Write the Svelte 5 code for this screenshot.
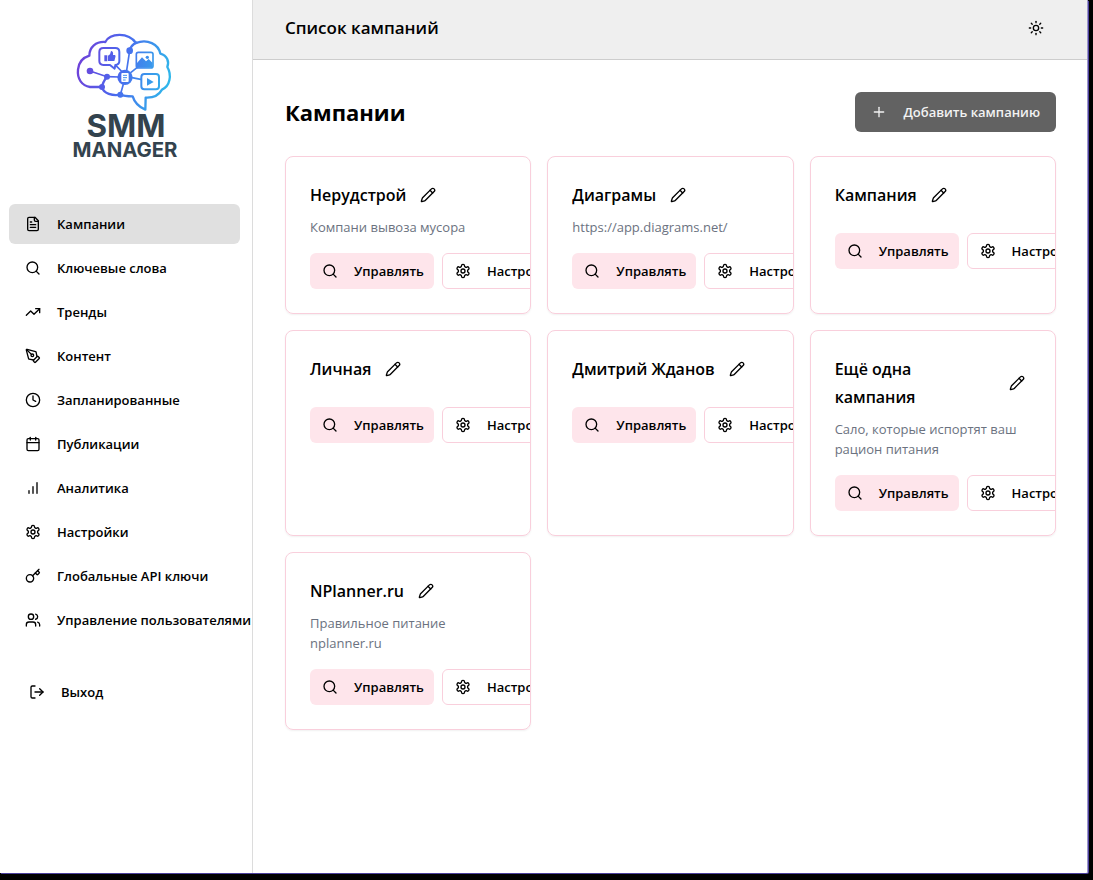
<script>
  const nav = [
    { label: 'Кампании', icon: 'file', active: true },
    { label: 'Ключевые слова', icon: 'search' },
    { label: 'Тренды', icon: 'trend' },
    { label: 'Контент', icon: 'pen' },
    { label: 'Запланированные', icon: 'clock' },
    { label: 'Публикации', icon: 'calendar' },
    { label: 'Аналитика', icon: 'bars' },
    { label: 'Настройки', icon: 'gear' },
    { label: 'Глобальные API ключи', icon: 'key' },
    { label: 'Управление пользователями', icon: 'users' }
  ];

  const campaigns = [
    { name: 'Нерудстрой', text: 'Компани вывоза мусора' },
    { name: 'Диаграмы', text: 'https://app.diagrams.net/' },
    { name: 'Кампания', text: '' },
    { name: 'Личная', text: '' },
    { name: 'Дмитрий Жданов', text: '' },
    { name: 'Ещё одна кампания', text: 'Сало, которые испортят ваш рацион питания' },
    { name: 'NPlanner.ru', text: 'Правильное питание nplanner.ru' }
  ];

  const icons = {
    file: ['M15 2H6a2 2 0 0 0-2 2v16a2 2 0 0 0 2 2h12a2 2 0 0 0 2-2V7Z', 'M14 2v4a2 2 0 0 0 2 2h4', 'M10 9H8', 'M16 13H8', 'M16 17H8'],
    search: ['M19 11a8 8 0 1 1-16 0a8 8 0 0 1 16 0Z', 'm21 21-4.3-4.3'],
    trend: ['M22 7l-8.5 8.5-5-5L2 17', 'M16 7h6v6'],
    pen: ['M15.707 21.293a1 1 0 0 1-1.414 0l-1.586-1.586a1 1 0 0 1 0-1.414l5.586-5.586a1 1 0 0 1 1.414 0l1.586 1.586a1 1 0 0 1 0 1.414z', 'm18 13-1.375-6.874a1 1 0 0 0-.746-.776L3.235 2.028a1 1 0 0 0-1.207 1.207L5.35 15.879a1 1 0 0 0 .776.746L13 18', 'm2.3 2.3 7.286 7.286', 'M13 11a2 2 0 1 1-4 0a2 2 0 0 1 4 0Z'],
    clock: ['M22 12a10 10 0 1 1-20 0a10 10 0 0 1 20 0Z', 'M12 6v6l4 2'],
    calendar: ['M8 2v4', 'M16 2v4', 'M5 4h14a2 2 0 0 1 2 2v14a2 2 0 0 1-2 2H5a2 2 0 0 1-2-2V6a2 2 0 0 1 2-2Z', 'M3 10h18'],
    bars: ['M12 20V10', 'M18 20V4', 'M6 20v-4'],
    gear: ['M12.22 2h-.44a2 2 0 0 0-2 2v.18a2 2 0 0 1-1 1.73l-.43.25a2 2 0 0 1-2 0l-.15-.08a2 2 0 0 0-2.73.73l-.22.38a2 2 0 0 0 .73 2.73l.15.1a2 2 0 0 1 1 1.72v.51a2 2 0 0 1-1 1.74l-.15.09a2 2 0 0 0-.73 2.73l.22.38a2 2 0 0 0 2.73.73l.15-.08a2 2 0 0 1 2 0l.43.25a2 2 0 0 1 1 1.73V20a2 2 0 0 0 2 2h.44a2 2 0 0 0 2-2v-.18a2 2 0 0 1 1-1.73l.43-.25a2 2 0 0 1 2 0l.15.08a2 2 0 0 0 2.73-.73l.22-.39a2 2 0 0 0-.73-2.73l-.15-.08a2 2 0 0 1-1-1.74v-.5a2 2 0 0 1 1-1.74l.15-.09a2 2 0 0 0 .73-2.73l-.22-.38a2 2 0 0 0-2.73-.73l-.15.08a2 2 0 0 1-2 0l-.43-.25a2 2 0 0 1-1-1.73V4a2 2 0 0 0-2-2z', 'M15 12a3 3 0 1 1-6 0a3 3 0 0 1 6 0Z'],
    key: ['m15.5 7.5 2.3 2.3a1 1 0 0 0 1.4 0l2.1-2.1a1 1 0 0 0 0-1.4L19 4', 'm21 2-9.6 9.6', 'M13 15.5a5.5 5.5 0 1 1-11 0a5.5 5.5 0 0 1 11 0Z'],
    users: ['M16 21v-2a4 4 0 0 0-4-4H6a4 4 0 0 0-4 4v2', 'M13 7a4 4 0 1 1-8 0a4 4 0 0 1 8 0Z', 'M22 21v-2a4 4 0 0 0-3-3.87', 'M16 3.13a4 4 0 0 1 0 7.75'],
    exit: ['M9 21H5a2 2 0 0 1-2-2V5a2 2 0 0 1 2-2h4', 'm16 17 5-5-5-5', 'M21 12H9'],
    pencil: ['M21.174 6.812a1 1 0 0 0-3.986-3.987L3.842 16.174a2 2 0 0 0-.5.83l-1.321 4.352a.5.5 0 0 0 .623.622l4.353-1.32a2 2 0 0 0 .83-.497z', 'm15 5 4 4'],
    plus: ['M5 12h14', 'M12 5v14'],
    sun: ['M16 12a4 4 0 1 1-8 0a4 4 0 0 1 8 0Z', 'M12 2v2', 'M12 20v2', 'm4.93 4.93 1.41 1.41', 'm17.66 17.66 1.41 1.41', 'M2 12h2', 'M20 12h2', 'm6.34 17.66-1.41 1.41', 'm19.07 4.93-1.41 1.41']
  };
</script>

{#snippet icon(name)}
  <svg class="icon" viewBox="0 0 24 24" aria-hidden="true">
    {#each icons[name] as d}<path {d} />{/each}
  </svg>
{/snippet}

<div class="app">
  <aside class="sidebar">
    <svg class="logo" viewBox="0 0 390 435" role="img" aria-label="SMM Manager">
      <defs>
        <linearGradient id="brand" gradientUnits="userSpaceOnUse" x1="50" y1="110" x2="330" y2="170">
          <stop offset="0" stop-color="#7040d8" />
          <stop offset="0.45" stop-color="#4a68ee" />
          <stop offset="1" stop-color="#2fb8ea" />
        </linearGradient>
      </defs>
      <g fill="none" stroke="url(#brand)" stroke-width="7" stroke-linecap="round" stroke-linejoin="round">
        <path d="M126 186H90C66 182 51 162 54 134C56 112 68 98 88 92C88 66 108 49 136 51C150 24 204 20 228 54C262 40 296 58 301 86C322 92 328 110 322 126C336 150 330 184 306 194C296 212 276 219 257 218L256 254C240 247 224 234 218 214C205 214 190 213 181 209C158 213 130 206 126 186C128 172 136 162 141 155" />
        <path d="M209 77C211 66 218 58 230 53" />
        <path d="M90 138L141 155L178 156M209 77L200 136M181 209L190 178M213 142L232 127M216 158L242 163M168 122L184 138" stroke-width="5" />
        <path d="M130 69H166Q178 69 178 81V108Q178 119 166 120L164 131L150 120H130Q118 119 118 108V81Q118 69 130 69Z" stroke-width="6" />
        <rect x="229" y="82" width="50" height="47" rx="6" stroke-width="5" />
        <rect x="244" y="147" width="53" height="46" rx="9" stroke-width="6" />
      </g>
      <g fill="url(#brand)">
        <circle cx="90" cy="138" r="10" />
        <circle cx="141" cy="155" r="9" />
        <circle cx="209" cy="77" r="10" />
        <circle cx="126" cy="186" r="9" />
        <circle cx="181" cy="209" r="9" />
        <circle cx="195" cy="157" r="23" />
        <path d="M133 91h9v18h-9zM144 92l6-4l3-10q8 1 6 12h6q3 2 1 7l-3 11h-19z" />
        <path d="M231 114L246 97L258 109L266 102L278 114V128H231Z" />
        <circle cx="262" cy="97" r="5" />
        <path d="M261 159v23l20-11z" />
      </g>
      <rect x="184" y="144" width="22" height="27" rx="3" fill="#fff" />
      <path d="M189 151h12M189 158h12M189 165h8" stroke="#4590ee" stroke-width="3" />
      <text x="198" y="335" class="brand-top">SMM</text>
      <text x="195" y="395" class="brand-bottom">MANAGER</text>
    </svg>
    <nav>
      {#each nav as item}
        <a href="#{item.icon}" class="nav-item" class:active={item.active}>{@render icon(item.icon)}{item.label}</a>
      {/each}
    </nav>
    <button class="exit" type="button">{@render icon('exit')}Выход</button>
  </aside>

  <div class="page">
    <header>
      <div class="bar-title">Список кампаний</div>
      <button class="theme" type="button" aria-label="Тема">{@render icon('sun')}</button>
    </header>
    <main>
      <div class="heading">
        <h1>Кампании</h1>
        <button class="add" type="button">{@render icon('plus')}Добавить кампанию</button>
      </div>
      <div class="grid">
        {#each campaigns as c}
          <article class="card">
            <div class="title">
              <h2>{c.name}</h2>
              <button class="edit" type="button" aria-label="Переименовать">{@render icon('pencil')}</button>
            </div>
            <p>{c.text}</p>
            <div class="actions">
              <button class="btn manage" type="button">{@render icon('search')}Управлять</button>
              <button class="btn settings" type="button">{@render icon('gear')}Настройки</button>
            </div>
          </article>
        {/each}
      </div>
    </main>
  </div>
</div>

<style>
  :global(body) {
    background: #000;
  }
  :global(#app) {
    box-sizing: border-box;
    min-height: 100vh;
    padding: 0 5px 7px 0;
    display: flex;
  }
  .app,
  .app * {
    box-sizing: border-box;
  }
  .app {
    flex: 1;
    display: flex;
    min-width: 0;
    background: #fff;
    color: #000;
    font-family: 'Open Sans', 'Noto Sans', sans-serif;
    font-size: 13px;
    line-height: 20px;
    border-bottom-right-radius: 2px;
    box-shadow: 1px 1px 0 #4b3f9c;
  }
  button {
    font: inherit;
    color: inherit;
    background: none;
    border: 0;
    padding: 0;
    cursor: pointer;
  }
  .icon {
    width: 16px;
    height: 16px;
    flex: none;
    fill: none;
    stroke: currentColor;
    stroke-width: 2;
    stroke-linecap: round;
    stroke-linejoin: round;
  }
  .sidebar {
    width: 253px;
    flex: none;
    display: flex;
    flex-direction: column;
    padding: 25px 12px 0 9px;
    border-right: 1px solid #dcdcdc;
  }
  .logo {
    width: 130px;
    height: 145px;
    margin: 0 auto 34px;
    display: block;
  }
  .brand-top,
  .brand-bottom {
    font-family: Inter, sans-serif;
    font-weight: 700;
    text-anchor: middle;
    fill: #33434e;
  }
  .brand-top {
    font-size: 94px;
  }
  .brand-bottom {
    font-size: 61px;
  }
  nav {
    display: flex;
    flex-direction: column;
    gap: 4px;
  }
  .nav-item,
  .exit {
    display: flex;
    align-items: center;
    gap: 16px;
    height: 40px;
    padding: 0 16px;
    border-radius: 6px;
    font-weight: 600;
    color: inherit;
    text-decoration: none;
    white-space: nowrap;
  }
  .active {
    background: #e0e0e0;
  }
  .exit {
    margin: 32px 0 0 4px;
  }
  .page {
    flex: 1;
    min-width: 0;
    border-right: 1px solid #9d97cb;
  }
  header {
    height: 60px;
    display: flex;
    align-items: center;
    justify-content: space-between;
    padding: 0 31px 3px 32px;
    background: #efefef;
    border-bottom: 1px solid #cdcdcd;
  }
  .bar-title {
    font-size: 17px;
    font-weight: 600;
    line-height: 28px;
  }
  .theme {
    width: 40px;
    height: 40px;
    display: grid;
    place-items: center;
  }
  main {
    padding: 32px 31px 32px 32px;
  }
  .heading {
    display: flex;
    align-items: center;
    justify-content: space-between;
    margin-bottom: 24px;
  }
  h1,
  h2,
  p {
    margin: 0;
  }
  h1 {
    font-size: 22px;
    font-weight: 700;
    line-height: 32px;
  }
  .add {
    display: flex;
    align-items: center;
    gap: 16px;
    height: 40px;
    padding: 0 16px;
    border-radius: 6px;
    background: #626262;
    color: #f2f2f2;
    font-weight: 600;
  }
  .grid {
    display: grid;
    grid-template-columns: repeat(3, minmax(0, 1fr));
    gap: 16px;
  }
  .card {
    display: flex;
    flex-direction: column;
    padding: 24px;
    border: 1px solid #f9cfdc;
    border-radius: 8px;
    box-shadow: 0 1px 2px rgba(0, 0, 0, 0.06);
    overflow: hidden;
  }
  .title {
    display: flex;
    align-items: center;
    gap: 8px;
    margin-bottom: 8px;
  }
  h2 {
    font-size: 16px;
    font-weight: 600;
    line-height: 28px;
  }
  .edit {
    width: 28px;
    height: 28px;
    flex: none;
    display: grid;
    place-items: center;
  }
  p {
    margin-bottom: 16px;
    color: #6b7280;
  }
  .actions {
    display: flex;
    gap: 8px;
  }
  .btn {
    display: flex;
    flex: none;
    align-items: center;
    gap: 16px;
    height: 36px;
    padding: 0 10px 0 12px;
    border-radius: 6px;
    font-weight: 600;
    white-space: nowrap;
  }
  .manage {
    background: #fee5eb;
  }
  .settings {
    border: 1px solid #f9cfdc;
  }
</style>
